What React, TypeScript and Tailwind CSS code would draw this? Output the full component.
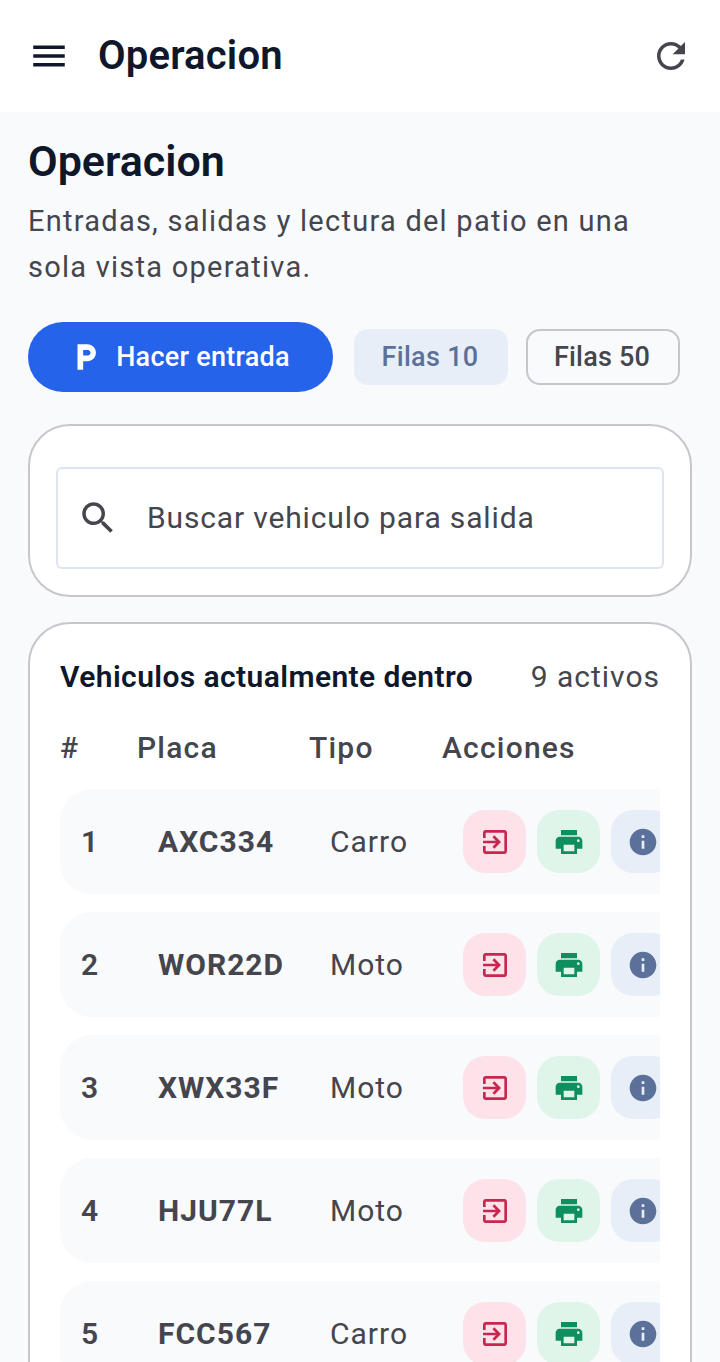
const rows = [
  { id: 1, plate: 'AXC334', type: 'Carro' },
  { id: 2, plate: 'WOR22D', type: 'Moto' },
  { id: 3, plate: 'XWX33F', type: 'Moto' },
  { id: 4, plate: 'HJU77L', type: 'Moto' },
  { id: 5, plate: 'FCC567', type: 'Carro' },
  { id: 6, plate: 'KLM901', type: 'Moto' },
];

const Icon = ({ d, className }: { d: string; className: string }) => (
  <svg viewBox="0 0 24 24" fill="currentColor" className={className}>
    <path d={d} />
  </svg>
);

const icons = {
  menu: 'M3 18h18v-2H3v2zm0-5h18v-2H3v2zm0-7v2h18V6H3z',
  refresh:
    'M17.65 6.35C16.2 4.9 14.21 4 12 4c-4.42 0-7.99 3.58-7.99 8s3.57 8 7.99 8c3.73 0 6.84-2.55 7.73-6h-2.08c-.82 2.33-3.04 4-5.65 4-3.31 0-6-2.69-6-6s2.69-6 6-6c1.66 0 3.14.69 4.22 1.78L13 11h7V4l-2.35 2.35z',
  search:
    'M15.5 14h-.79l-.28-.27C15.41 12.59 16 11.11 16 9.5 16 5.91 13.09 3 9.5 3S3 5.91 3 9.5 5.91 16 9.5 16c1.61 0 3.09-.59 4.23-1.57l.27.28v.79l5 4.99L20.49 19l-4.99-5zm-6 0C7.01 14 5 11.99 5 9.5S7.01 5 9.5 5 14 7.01 14 9.5 11.99 14 9.5 14z',
  print:
    'M19 8H5c-1.66 0-3 1.34-3 3v6h4v4h12v-4h4v-6c0-1.66-1.34-3-3-3zm-3 11H8v-5h8v5zm3-7c-.55 0-1-.45-1-1s.45-1 1-1 1 .45 1 1-.45 1-1 1zm-1-9H6v4h12V3z',
  info: 'M12 2C6.48 2 2 6.48 2 12s4.48 10 10 10 10-4.48 10-10S17.52 2 12 2zm1 15h-2v-6h2v6zm0-8h-2V7h2v2z',
  exit: 'M10.09 15.59L11.5 17l5-5-5-5-1.41 1.41L12.67 11H3v2h9.67l-2.58 2.59zM19 3H5c-1.11 0-2 .9-2 2v4h2V5h14v14H5v-4H3v4c0 1.1.89 2 2 2h14c1.1 0 2-.9 2-2V5c0-1.1-.9-2-2-2z',
  parking: 'M13 3H6v18h4v-6h3c3.31 0 6-2.69 6-6s-2.69-6-6-6zm.2 8H10V7h3.2c1.1 0 2 .9 2 2s-.9 2-2 2z',
};

export default function App() {
  return (
    <div className="h-[1362px] w-[720px] overflow-hidden bg-[#f8fafc] font-['Roboto',sans-serif] text-[#0f172a]">
      <header className="flex h-[112px] items-center bg-white px-[28px]">
        <Icon d={icons.menu} className="h-[42px] w-[42px] text-[#0f172a]" />
        <h1 className="ml-[28px] flex-1 text-[40px] font-semibold leading-none tracking-[0.2px]">Operacion</h1>
        <Icon d={icons.refresh} className="h-[42px] w-[42px] text-[#45454d]" />
      </header>

      <main className="px-[28px] pt-[24px]">
        <h2 className="text-[43px] font-semibold leading-[50px]">Operacion</h2>
        <p className="mt-[12px] max-w-[640px] text-[29px] leading-[46px] tracking-[1.25px] text-[#45454d]">
          Entradas, salidas y lectura del patio en una sola vista operativa.
        </p>

        <div className="mt-[32px] flex items-center">
          <button className="flex h-[70px] w-[305px] items-center justify-center rounded-[35px] bg-[#2563eb] pr-[2px] text-[27px] font-medium tracking-[0.25px] text-white">
            <Icon d={icons.parking} className="mr-[13px] h-[34px] w-[34px]" />
            Hacer entrada
          </button>
          <button className="ml-[21px] h-[56px] w-[154px] rounded-[14px] bg-[#e8eef8] pr-[2px] text-[27px] font-medium tracking-[0.3px] text-[#5b7199]">
            Filas 10
          </button>
          <button className="ml-[18px] h-[56px] w-[154px] rounded-[14px] border-2 border-[#c8c6cd] pr-[2px] text-[27px] font-medium tracking-[0.2px] text-[#45454d]">
            Filas 50
          </button>
        </div>

        <section className="mt-[32px] rounded-[42px] border-2 border-[#c8c6cd] bg-white px-[26px] pb-[26px] pt-[41px]">
          <div className="flex h-[102px] items-center rounded-[6px] border-2 border-[#dbe4f0] pl-[19px]">
            <Icon d={icons.search} className="h-[42px] w-[42px] text-[#45454d]" />
            <span className="ml-[28px] pb-[2px] text-[30px] tracking-[0.85px] text-[#45454d]">Buscar vehiculo para salida</span>
          </div>
        </section>

        <section className="mt-[25px] rounded-[42px] border-2 border-[#c8c6cd] bg-white px-[30px] pb-[30px] pt-[30px]">
          <div className="flex items-center justify-between">
            <h3 className="text-[30px] font-semibold leading-[40px] tracking-[0.4px]">Vehiculos actualmente dentro</h3>
            <span className="text-[30px] tracking-[1px] text-[#45454d]">9 activos</span>
          </div>

          <div className="overflow-hidden">
            <div className="mb-[11px] mt-[17px] flex h-[62px] items-center text-[30px] font-medium tracking-[1.2px] text-[#45454d]">
              <span className="w-[77px]">#</span>
              <span className="w-[172px]">Placa</span>
              <span className="w-[133px]">Tipo</span>
              <span>Acciones</span>
            </div>
            <div className="flex w-[700px] flex-col gap-[18px]">
              {rows.map((row) => (
                <div key={row.id} className="flex h-[105px] items-center rounded-[32px] bg-[#f8fafc] pl-[21px] text-[30px] text-[#45454d]">
                  <span className="w-[77px] font-semibold">{row.id}</span>
                  <span className="w-[172px] font-bold tracking-[1px]">{row.plate}</span>
                  <span className="w-[133px] tracking-[1px]">{row.type}</span>
                  <div className="flex gap-[11px]">
                    <button className="flex h-[63px] w-[63px] items-center justify-center rounded-[22px] bg-[#fde2e9]">
                      <Icon d={icons.exit} className="h-[32px] w-[32px] text-[#c9264f]" />
                    </button>
                    <button className="flex h-[63px] w-[63px] items-center justify-center rounded-[22px] bg-[#dff5ea]">
                      <Icon d={icons.print} className="h-[32px] w-[32px] text-[#0f8f5f]" />
                    </button>
                    <button className="flex h-[63px] w-[63px] items-center justify-center rounded-[22px] bg-[#e8eef8]">
                      <Icon d={icons.info} className="h-[32px] w-[32px] text-[#5b7199]" />
                    </button>
                  </div>
                </div>
              ))}
            </div>
          </div>
        </section>
      </main>
    </div>
  );
}
